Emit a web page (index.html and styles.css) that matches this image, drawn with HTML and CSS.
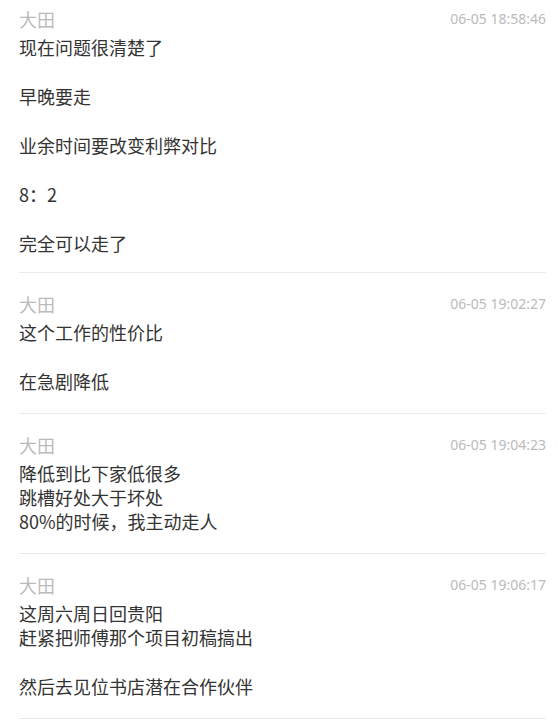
FILE: index.html
```html
<!DOCTYPE html>
<html lang="zh-CN">
<head>
  <meta charset="UTF-8" />
  <title>大田</title>
  <link rel="stylesheet" href="styles.css">
</head>
<body>
  <div class="list">
    <div class="msg">
      <div class="msg-head">
        <span class="name">大田</span>
        <span class="time">06-05 18:58:46</span>
      </div>
      <div class="msg-body">
        <p>现在问题很清楚了</p>
        <p>早晚要走</p>
        <p>业余时间要改变利弊对比</p>
        <p>8：2</p>
        <p>完全可以走了</p>
      </div>
    </div>

    <div class="msg">
      <div class="msg-head">
        <span class="name">大田</span>
        <span class="time">06-05 19:02:27</span>
      </div>
      <div class="msg-body">
        <p>这个工作的性价比</p>
        <p>在急剧降低</p>
      </div>
    </div>

    <div class="msg">
      <div class="msg-head">
        <span class="name">大田</span>
        <span class="time">06-05 19:04:23</span>
      </div>
      <div class="msg-body">
        <p>降低到比下家低很多<br>跳槽好处大于坏处<br>80%的时候，我主动走人</p>
      </div>
    </div>

    <div class="msg">
      <div class="msg-head">
        <span class="name">大田</span>
        <span class="time">06-05 19:06:17</span>
      </div>
      <div class="msg-body">
        <p>这周六周日回贵阳<br>赶紧把师傅那个项目初稿搞出</p>
        <p>然后去见位书店潜在合作伙伴</p>
      </div>
    </div>
  </div>
</body>
</html>
```

FILE: styles.css
```css
body {
  margin: 0;
  padding: 0;
  background: #fff;
  color: #333;
  font-family: "Noto Sans CJK SC", sans-serif;
}
.list {
  padding: 0 12px 0 19px;
}
.msg {
  padding: 19px 0 20px;
  border-bottom: 1px solid #ebebeb;
}
.msg:first-child {
  padding: 7px 0 17px;
}
.msg-head {
  display: flex;
  justify-content: space-between;
  align-items: flex-start;
  margin-bottom: 4px;
}
.name {
  font-size: 18px;
  line-height: 24px;
  color: #bbb;
}
.time {
  font-family: "Noto Sans", sans-serif;
  font-size: 14px;
  line-height: 24px;
  color: #bbb;
}
.msg-body {
  font-size: 18px;
  line-height: 24px;
}
.msg-body p {
  margin: 0;
}
.msg-body p + p {
  margin-top: 25px;
}
```
